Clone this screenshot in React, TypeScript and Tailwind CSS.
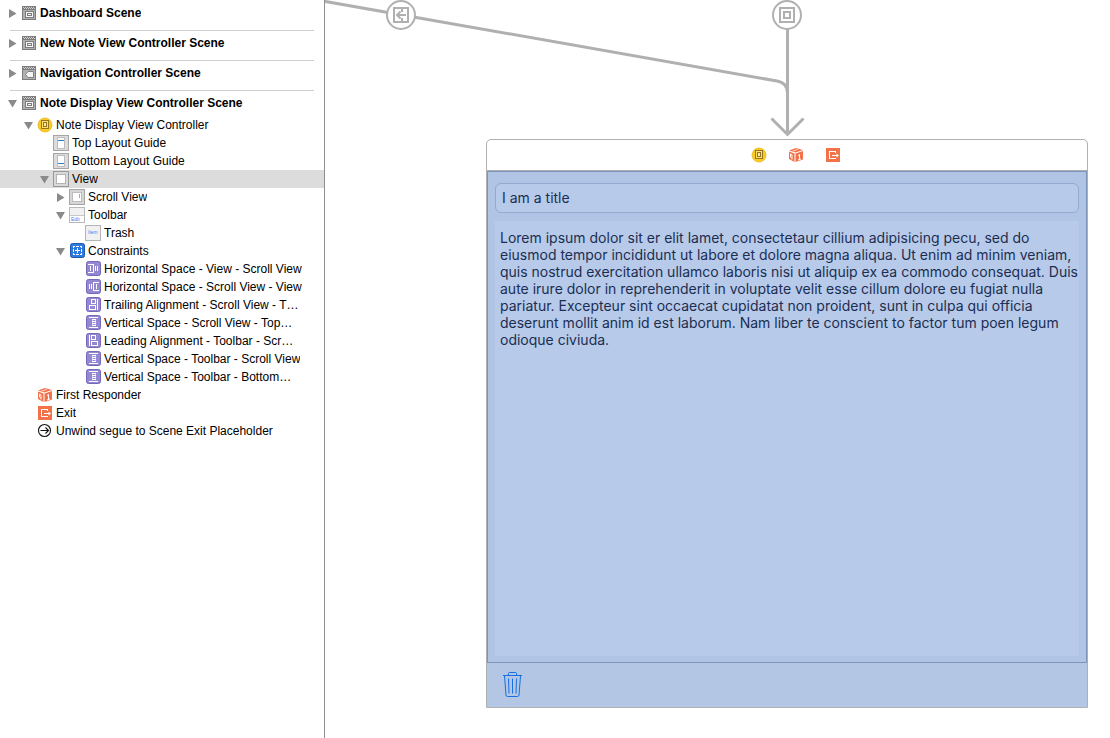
import { useState } from "react";
import type { ReactNode } from "react";

type IconName =
  | "scene"
  | "navScene"
  | "controller"
  | "topGuide"
  | "bottomGuide"
  | "view"
  | "scroll"
  | "toolbar"
  | "item"
  | "constraints"
  | "leadSpace"
  | "trailSpace"
  | "trailAlign"
  | "leadAlign"
  | "vertSpace"
  | "responder"
  | "exit"
  | "unwind";

type Row = {
  label: string;
  icon: IconName;
  depth: 1 | 2 | 3 | 4;
  open?: boolean;
};

const indent = {
  1: "pl-[24px]",
  2: "pl-[40px]",
  3: "pl-[56px]",
  4: "pl-[72px]",
};

const closedScenes: { label: string; icon: IconName }[] = [
  { label: "Dashboard Scene", icon: "scene" },
  { label: "New Note View Controller Scene", icon: "scene" },
  { label: "Navigation Controller Scene", icon: "navScene" },
];

const rows: Row[] = [
  { label: "Note Display View Controller", icon: "controller", depth: 1, open: true },
  { label: "Top Layout Guide", icon: "topGuide", depth: 2 },
  { label: "Bottom Layout Guide", icon: "bottomGuide", depth: 2 },
  { label: "View", icon: "view", depth: 2, open: true },
  { label: "Scroll View", icon: "scroll", depth: 3, open: false },
  { label: "Toolbar", icon: "toolbar", depth: 3, open: true },
  { label: "Trash", icon: "item", depth: 4 },
  { label: "Constraints", icon: "constraints", depth: 3, open: true },
  { label: "Horizontal Space - View - Scroll View", icon: "leadSpace", depth: 4 },
  { label: "Horizontal Space - Scroll View - View", icon: "trailSpace", depth: 4 },
  { label: "Trailing Alignment - Scroll View - T…", icon: "trailAlign", depth: 4 },
  { label: "Vertical Space - Scroll View - Top…", icon: "vertSpace", depth: 4 },
  { label: "Leading Alignment - Toolbar - Scr…", icon: "leadAlign", depth: 4 },
  { label: "Vertical Space - Toolbar - Scroll View", icon: "vertSpace", depth: 4 },
  { label: "Vertical Space - Toolbar - Bottom…", icon: "vertSpace", depth: 4 },
  { label: "First Responder", icon: "responder", depth: 1 },
  { label: "Exit", icon: "exit", depth: 1 },
  { label: "Unwind segue to Scene Exit Placeholder", icon: "unwind", depth: 1 },
];

const lorem =
  "Lorem ipsum dolor sit er elit lamet, consectetaur cillium adipisicing pecu, sed do eiusmod tempor incididunt ut labore et dolore magna aliqua. Ut enim ad minim veniam, quis nostrud exercitation ullamco laboris nisi ut aliquip ex ea commodo consequat. Duis aute irure dolor in reprehenderit in voluptate velit esse cillum dolore eu fugiat nulla pariatur. Excepteur sint occaecat cupidatat non proident, sunt in culpa qui officia deserunt mollit anim id est laborum. Nam liber te conscient to factor tum poen legum odioque civiuda.";

function ConstraintTile({ children }: { children: ReactNode }) {
  return (
    <>
      <rect x="1.5" y="0.5" width="14" height="14" rx="2" fill="#9488d2" stroke="#7469b8" />
      <g fill="none" stroke="#fff" shapeRendering="crispEdges">
        {children}
      </g>
    </>
  );
}

const clapper = (
  <>
    <rect x="1" y="1" width="14" height="14" fill="#7c7c7c" />
    <path
      d="M2 2h1v1h-1zM4 2h1v1h-1zM6 2h1v1h-1zM8 2h1v1h-1zM10 2h1v1h-1zM12 2h1v1h-1zM3 3h1v1h-1zM5 3h1v1h-1zM7 3h1v1h-1zM9 3h1v1h-1zM11 3h1v1h-1zM13 3h1v1h-1z"
      fill="#d2d2d2"
    />
    <rect x="2" y="5" width="12" height="9" fill="#b0b0b0" />
  </>
);

const drawings: Record<IconName, ReactNode> = {
  scene: (
    <g shapeRendering="crispEdges">
      {clapper}
      <rect x="4.5" y="6.5" width="8" height="6" fill="#f6f6f6" stroke="#7c7c7c" />
      <rect x="6.5" y="8.5" width="4" height="2" fill="#f6f6f6" stroke="#7c7c7c" />
    </g>
  ),
  navScene: (
    <g>
      {clapper}
      <path d="M4.500 9.500 7 6.500h5.500v6H7z" fill="#f4f4f4" stroke="#808080" />
    </g>
  ),
  controller: (
    <>
      <circle cx="8" cy="8" r="7" fill="#fccb22" stroke="#e9b716" strokeWidth="0.8" />
      <g shapeRendering="crispEdges">
        <rect x="4.5" y="3.5" width="7" height="8" fill="#ffdf6e" stroke="#947522" />
        <rect x="6.5" y="5.5" width="3" height="4" fill="#ffe99a" stroke="#947522" />
      </g>
    </>
  ),
  topGuide: (
    <g shapeRendering="crispEdges">
      <rect x="0.5" y="0.5" width="15" height="15" fill="#dcdcdc" stroke="#a6a6a6" />
      <rect x="4.5" y="2.5" width="7" height="11" fill="#fff" stroke="#bcbcbc" />
      <path d="M5 5.5h6" stroke="#2f7fc4" />
    </g>
  ),
  bottomGuide: (
    <g shapeRendering="crispEdges">
      <rect x="0.5" y="0.5" width="15" height="15" fill="#dcdcdc" stroke="#a6a6a6" />
      <rect x="4.5" y="2.5" width="7" height="11" fill="#fff" stroke="#bcbcbc" />
      <path d="M5 10.5h6" stroke="#2f7fc4" />
    </g>
  ),
  view: (
    <g shapeRendering="crispEdges">
      <rect x="0.5" y="0.5" width="15" height="15" fill="#d9d9d9" stroke="#989898" />
      <rect x="3.5" y="3.5" width="9" height="9" fill="#fff" stroke="#b4b4b4" />
    </g>
  ),
  scroll: (
    <g shapeRendering="crispEdges">
      <rect x="0.5" y="0.5" width="15" height="15" fill="#d6d6d6" stroke="#a6a6a6" />
      <rect x="3.5" y="3.5" width="9" height="9" fill="#fff" stroke="#bcbcbc" />
      <path d="M10.5 5v4" stroke="#a9a9a9" />
    </g>
  ),
  toolbar: (
    <>
      <rect x="0.5" y="0.5" width="15" height="15" fill="#f1f1f1" stroke="#b9b9b9" />
      <rect x="1" y="9" width="14" height="6" fill="#fff" />
      <path d="M1 8.5h14" stroke="#c9c9c9" />
      <text x="2" y="14" fontSize="5" fill="#4f7df0">Edit</text>
    </>
  ),
  item: (
    <>
      <rect x="0.5" y="0.5" width="15" height="15" fill="#f1f1f1" stroke="#b4b4b4" />
      <text x="3" y="9" fontSize="5" fill="#4f7df0">Item</text>
    </>
  ),
  constraints: (
    <>
      <rect x="1.5" y="0.5" width="14" height="14" rx="2" fill="#2d7be0" stroke="#1f57ad" />
      <g fill="none" stroke="#fff" shapeRendering="crispEdges">
        <path d="M4 3.500h2M7 3.500h3M11 3.500h2M4 11.500h2M7 11.500h3M11 11.500h2M4.500 3v2M4.500 6v3M4.500 10v2M12.500 3v2M12.500 6v3M12.500 10v2" />
        <path d="M8.500 5v5M6 7.500h5" />
      </g>
    </>
  ),
  leadSpace: (
    <ConstraintTile>
      <path d="M3 3.500h5.500v8H3M5.500 5v5M10.500 5v5M12.500 5v5" />
    </ConstraintTile>
  ),
  trailSpace: (
    <ConstraintTile>
      <path d="M4.500 5v5M6.500 5v5M14 3.500H8.500v8H14M11.500 5v5" />
    </ConstraintTile>
  ),
  trailAlign: (
    <ConstraintTile>
      <path d="M12.500 2v11M6.500 2.500h4v4h-4zM4.500 8.500h6v4h-6z" />
    </ConstraintTile>
  ),
  leadAlign: (
    <ConstraintTile>
      <path d="M4.500 2v11M6.500 2.500h4v4h-4zM6.500 8.500h6v4h-6z" />
    </ConstraintTile>
  ),
  vertSpace: (
    <ConstraintTile>
      <path d="M4 2.500h9M4 12.500h9M7 4.500h4M7 6.500h4M7 8.500h4M7 10.500h4" />
      <path d="M7.500 4v7M10.500 4v7" strokeOpacity="0.5" />
    </ConstraintTile>
  ),
  responder: (
    <>
      <path d="M1 3.500 8 1l7 2-7.500 2.500z" fill="#f4724a" />
      <path d="M1 4.500l5.500 2v8.500L1 12z" fill="#f4724a" />
      <path d="M7.500 6.500 15 4v8.500L7.500 15z" fill="#f4724a" />
      <path d="M4.500 4.200 10 2.300" stroke="#fff" strokeWidth="0.700" />
      <path d="M10 8.500 11.500 7.500v5M10 13l3-1" fill="none" stroke="#fff" />
      <path d="M2.500 7v3l1.500 1V7.800zM4 11v1.500" fill="none" stroke="#fff" strokeWidth="0.900" />
    </>
  ),
  exit: (
    <g>
      <rect x="1" y="1" width="14" height="14" fill="#f4724a" shapeRendering="crispEdges" />
      <path
        d="M10.500 6V4.500h-6v7h6V11M7 8.500h6"
        fill="none"
        stroke="#fff"
        shapeRendering="crispEdges"
      />
      <path d="M11.500 6.500 14 8.500l-2.500 2z" fill="#fff" />
    </g>
  ),
  unwind: (
    <g fill="none" stroke="#111" strokeWidth="1.100">
      <circle cx="7.500" cy="7.500" r="6" />
      <path d="M3.500 7.500h7.500M8.500 4.500l3 3-3 3" />
    </g>
  ),
};

function Icon({ name }: { name: IconName }) {
  return (
    <svg className="size-4 shrink-0" viewBox="0 0 16 16" aria-hidden="true">
      {drawings[name]}
    </svg>
  );
}

function Disclosure({ label, initial }: { label: string; initial: boolean }) {
  const [open, setOpen] = useState(initial);
  return (
    <button
      type="button"
      aria-label={label}
      aria-expanded={open}
      onClick={() => setOpen(!open)}
      className="flex h-4 w-[9px] shrink-0 items-center justify-center"
    >
      <svg className="size-[9px]" viewBox="0 0 9 9" aria-hidden="true">
        <path d={open ? "M0 1h9L4.500 8.500z" : "M1 0v9L8.500 4.500z"} fill="#8a8a8a" />
      </svg>
    </button>
  );
}

function SceneHeader({ label, icon, open }: { label: string; icon: IconName; open: boolean }) {
  return (
    <h2 className="flex h-[18px] items-center pl-2 font-bold">
      <Disclosure label={label} initial={open} />
      <span className="ml-1 flex">
        <Icon name={icon} />
      </span>
      <span className="ml-[3px] truncate">{label}</span>
    </h2>
  );
}

function Outline() {
  return (
    <nav
      aria-label="Document outline"
      className="w-[325px] shrink-0 border-r border-[#8f8f8f] bg-white pt-1 text-[12px] leading-[18px] text-black"
    >
      {closedScenes.map((scene) => (
        <section key={scene.label}>
          <SceneHeader label={scene.label} icon={scene.icon} open={false} />
          <hr className="mt-2 mr-[10px] mb-[3px] ml-[10px] border-t border-[#cfcfcf]" />
        </section>
      ))}
      <section>
        <SceneHeader label="Note Display View Controller Scene" icon="scene" open />
        <ul className="mt-1">
          {rows.map((row) => (
            <li
              key={row.label}
              className={`flex h-[18px] items-center ${indent[row.depth]} ${row.label === "View" ? "bg-[#dcdcdc]" : ""}`}
            >
              {row.open === undefined ? (
                <span className="w-[9px] shrink-0" />
              ) : (
                <Disclosure label={row.label} initial={row.open} />
              )}
              <span className="ml-1 flex">
                <Icon name={row.icon} />
              </span>
              <span className="ml-[3px] truncate">{row.label}</span>
            </li>
          ))}
        </ul>
      </section>
    </nav>
  );
}

function Segues() {
  return (
    <svg
      className="absolute top-0 left-0 h-[139px] w-[785px]"
      viewBox="0 0 785 139"
      fill="none"
      stroke="#b0b0b0"
      aria-hidden="true"
    >
      <path d="M-2 1 452 81q10.500 2 10.500 12" strokeWidth="3" />
      <path d="M462.500 29v105" strokeWidth="3" />
      <path d="M446.500 118.500l16 16 16-16" strokeWidth="3" />
      <circle cx="76" cy="15" r="14" fill="#fff" strokeWidth="2" />
      <rect x="69" y="8" width="14" height="14" strokeWidth="2" />
      <path d="M77 8v4M77 18v4" strokeWidth="2" />
      <path d="M72 15h9M75.500 11.500 72 15l3.500 3.500" strokeWidth="2" />
      <circle cx="462" cy="15" r="14" fill="#fff" strokeWidth="2" />
      <rect x="455" y="8" width="14" height="14" strokeWidth="2" />
      <rect x="459" y="12" width="6" height="6" strokeWidth="2" />
    </svg>
  );
}

export default function App() {
  return (
    <div className="flex min-h-screen bg-white font-['Liberation_Sans',Arial,sans-serif]">
      <Outline />
      <main className="relative min-w-0 flex-1 pt-[139px] pr-[22px] pb-[30px] pl-[161px]">
        <Segues />
        <section
          aria-label="Note Display View Controller"
          className="rounded-t-[5px] border border-[#b0b0b0] bg-white font-[Inter,'Liberation_Sans',sans-serif] text-[14px] text-[#1b2e52]"
        >
          <header className="flex h-[31px] items-center justify-center gap-[21px] border-b border-[#b0b0b0] pl-[18px]">
            <button type="button" aria-label="View controller">
              <Icon name="controller" />
            </button>
            <button type="button" aria-label="First responder">
              <Icon name="responder" />
            </button>
            <button type="button" aria-label="Exit">
              <Icon name="exit" />
            </button>
          </header>
          <div className="flex flex-col gap-2 border border-[#7d93b8] bg-[#b0c4e6] px-[7px] pt-[11px] pb-[6px]">
            <input
              aria-label="Title"
              defaultValue="I am a title"
              className="h-[30px] w-full rounded-[6px] border border-[#94a9cf] bg-[#b7cae9] px-[6px] pb-[2px] outline-none"
            />
            <textarea
              aria-label="Note"
              defaultValue={lorem}
              className="block h-[435px] w-full resize-none overflow-hidden bg-[#b7cae9] pt-2 pl-[5px] leading-[17px] outline-none"
            />
          </div>
          <footer className="flex h-[44px] items-center bg-[#b3c6e4] pb-[2px] pl-[15px]">
            <button type="button" aria-label="Trash">
              <svg
                className="h-[26px] w-5"
                viewBox="0 0 20 26"
                fill="none"
                stroke="#1a6fe0"
                strokeLinejoin="round"
                aria-hidden="true"
              >
                <path d="M1 4.500h19M6.500 4V2.500q0-1 1-1h6q1 0 1 1V4M2.500 5l1.500 19q.1 1.500 1.500 1.500h10q1.400 0 1.500-1.500L18.500 5" />
                <path d="M6.500 7.500 7 22.500M10.500 7.500v15M14.500 7.500 14 22.500" />
              </svg>
            </button>
          </footer>
        </section>
      </main>
    </div>
  );
}
